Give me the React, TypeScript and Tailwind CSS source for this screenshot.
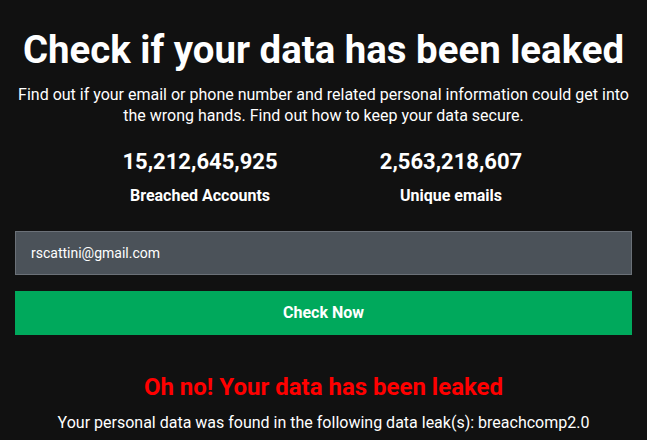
import React from "react";

export default function App(): React.ReactElement {
  return (
    <div
      className="min-h-screen bg-[#111111] px-[15px] pt-[26px] text-white"
      style={{ fontFamily: "Roboto, 'Liberation Sans', sans-serif" }}
    >
      {/* Heading */}
      <h1 className="whitespace-nowrap text-center text-[38.4px] font-bold leading-[48px]">
        Check if your data has been leaked
      </h1>
      <p className="mt-[10px] text-center text-[16px] leading-[21px]">
        Find out if your email or phone number and related personal information could get into
        the wrong hands. Find out how to keep your data secure.
      </p>

      {/* Stats */}
      <div className="mt-[22px] flex justify-center gap-[51px] pl-[4px]">
        <div className="flex w-[200px] flex-col items-center">
          <span className="text-[22px] font-bold leading-[28px]">15,212,645,925</span>
          <span className="mt-[10px] text-[16px] font-bold leading-[20px]">Breached Accounts</span>
        </div>
        <div className="flex w-[200px] flex-col items-center">
          <span className="text-[22px] font-bold leading-[28px]">2,563,218,607</span>
          <span className="mt-[10px] text-[16px] font-bold leading-[20px]">Unique emails</span>
        </div>
      </div>

      {/* Form */}
      <div className="mt-[25px] flex flex-col gap-[16px]">
        <input
          type="text"
          defaultValue="rscattini@gmail.com"
          className="h-[44px] w-full border border-[#6b7178] bg-[#4b5259] px-[15px] text-[14px] text-white outline-none"
        />
        <button className="h-[44px] w-full bg-[#00a95c] text-[16px] font-bold text-white">
          Check Now
        </button>
      </div>

      {/* Result */}
      <div className="mt-[37px] text-center">
        <h2 className="whitespace-nowrap text-[24px] font-bold leading-[30px] text-[#ff0000]">
          Oh no! Your data has been leaked
        </h2>
        <p className="mt-[10px] text-[16px] leading-[22px]">
          Your personal data was found in the following data leak(s): breachcomp2.0
        </p>
      </div>
    </div>
  );
}
